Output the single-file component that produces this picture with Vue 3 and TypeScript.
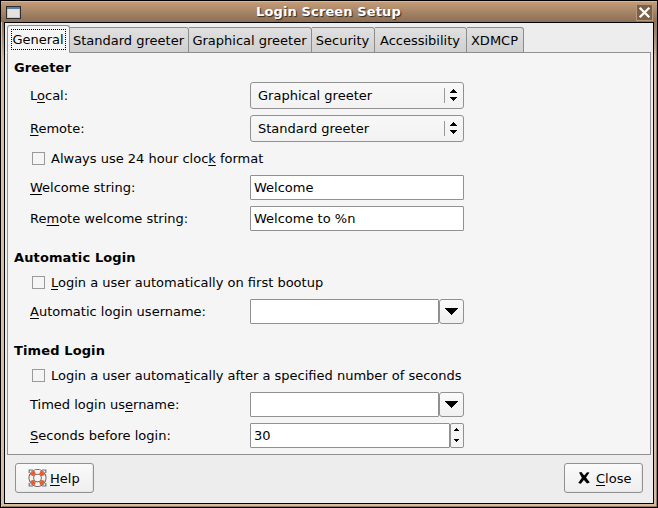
<script setup lang="ts">
import { ref } from 'vue'

interface Label { pre: string; key: string; post: string }

const tabs: { name: string; width: number }[] = [
  { name: 'General', width: 63 },
  { name: 'Standard greeter', width: 119 },
  { name: 'Graphical greeter', width: 123 },
  { name: 'Security', width: 63 },
  { name: 'Accessibility', width: 92 },
  { name: 'XDMCP', width: 57 },
]
const active = ref('General')

type Kind = 'select' | 'check' | 'text' | 'combo' | 'spin'
interface Field { kind: Kind; label: Label; value: string }

const l = (pre: string, key: string, post: string): Label => ({ pre, key, post })

const groups = ref<{ title: string; fields: Field[] }[]>([
  {
    title: 'Greeter',
    fields: [
      { kind: 'select', label: l('L', 'o', 'cal:'), value: 'Graphical greeter' },
      { kind: 'select', label: l('', 'R', 'emote:'), value: 'Standard greeter' },
      { kind: 'check', label: l('Always use 24 hour cloc', 'k', ' format'), value: '' },
      { kind: 'text', label: l('', 'W', 'elcome string:'), value: 'Welcome' },
      { kind: 'text', label: l('Re', 'm', 'ote welcome string:'), value: 'Welcome to %n' },
    ],
  },
  {
    title: 'Automatic Login',
    fields: [
      { kind: 'check', label: l('', 'L', 'ogin a user automatically on first bootup'), value: '' },
      { kind: 'combo', label: l('', 'A', 'utomatic login username:'), value: '' },
    ],
  },
  {
    title: 'Timed Login',
    fields: [
      { kind: 'check', label: l('Login a user automa', 't', 'ically after a specified number of seconds'), value: '' },
      { kind: 'combo', label: l('Timed login us', 'e', 'rname:'), value: '' },
      { kind: 'spin', label: l('', 'S', 'econds before login:'), value: '30' },
    ],
  },
])
</script>

<template>
  <div class="window">
    <header class="titlebar">
      <svg class="winicon" width="15" height="13" viewBox="0 0 15 13" shape-rendering="crispEdges">
        <rect width="15" height="13" fill="#2b2e30" />
        <rect x="1" y="1" width="13" height="2" fill="#5d7f9f" />
        <rect x="1" y="3" width="13" height="9" fill="#c9c8c5" />
        <rect x="2" y="3" width="11" height="8" fill="#e4e3e0" />
      </svg>
      <h1 class="title">Login Screen Setup</h1>
      <button class="winclose" aria-label="Close window">
        <svg width="15" height="15" viewBox="0 0 15 15">
          <path d="M2.7 2.7 12.3 12.3M12.3 2.7 2.7 12.3" stroke="#fff" stroke-width="2.3" />
        </svg>
      </button>
    </header>
    <main class="client">
      <nav class="tabs">
        <button
          v-for="t in tabs"
          :key="t.name"
          class="tab"
          :class="{ active: t.name === active }"
          :style="{ width: t.width + 'px' }"
          @click="active = t.name"
        ><span>{{ t.name }}</span></button>
      </nav>
      <div class="page">
        <section v-for="g in groups" :key="g.title" class="group">
          <h2>{{ g.title }}</h2>
          <label v-for="(f, i) in g.fields" :key="i" class="row" :class="f.kind">
            <span v-if="f.kind === 'check'" class="box"></span>
            <span class="label">{{ f.label.pre }}<u>{{ f.label.key }}</u>{{ f.label.post }}</span>
            <span v-if="f.kind === 'select'" class="dropdown">
              <span class="choice">{{ f.value }}</span>
              <svg width="7" height="12" viewBox="0 0 7 12" shape-rendering="crispEdges">
                <path d="M3 0h1v1h1v1h1v1h1v1H0V3h1V2h1V1h1zM0 8h7v1H6v1H5v1H4v1H3v-1H2v-1H1V9H0z" />
              </svg>
            </span>
            <input v-else-if="f.kind !== 'check'" v-model="f.value" class="entry" type="text" spellcheck="false" />
            <span v-if="f.kind === 'combo'" class="arrow">
              <svg width="13" height="7" viewBox="0 0 13 7" shape-rendering="crispEdges">
                <path d="M0 0h13v1h-1v1h-1v1h-1v1H9v1H8v1H7v1H6V6H5V5H4V4H3V3H2V2H1V1H0z" />
              </svg>
            </span>
            <span v-if="f.kind === 'spin'" class="spinner">
              <svg width="5" height="14" viewBox="0 0 5 14" shape-rendering="crispEdges">
                <path d="M2 0h1v1h1v1h1v1H0V2h1V1h1zM0 11h5v1H4v1H3v1H2v-1H1v-1H0z" />
              </svg>
            </span>
          </label>
        </section>
      </div>
      <footer class="actions">
        <button class="action help">
          <svg width="19" height="20" viewBox="0 0 19 20">
            <path d="M1.2 5V2H5M14 2h3.8V5M17.8 15v3H14M5 18H1.2v-3" fill="none" stroke="#6d7274" stroke-width="1.2" />
            <circle cx="9.5" cy="10" r="6.2" fill="none" stroke="#4a4a48" stroke-width="5.6" />
            <circle cx="9.5" cy="10" r="6.2" fill="none" stroke="#f4f2ee" stroke-width="4" />
            <path d="M9.5 10m5.73-2.37a6.2 6.2 0 0 0-3.36-3.36M7.13 4.27a6.2 6.2 0 0 0-3.36 3.36M3.77 12.37a6.2 6.2 0 0 0 3.36 3.36M11.87 15.73a6.2 6.2 0 0 0 3.36-3.36" fill="none" stroke="#ee5a2c" stroke-width="3.8" />
          </svg>
          <span><u>H</u>elp</span>
        </button>
        <button class="action close">
          <svg width="12" height="12" viewBox="0 0 12 12">
            <path d="M1 0.6 3.4 0 6.2 3.4 9 0.2 11.5 0.6 8 5.6 11.8 10.6 9 11.6 5.9 8 2.8 11.8 0.2 11 3.9 5.7z" />
          </svg>
          <span><u>C</u>lose</span>
        </button>
      </footer>
    </main>
  </div>
</template>

<style>
body {
  margin: 0;
  overflow: hidden;
}
</style>

<style scoped>
* {
  box-sizing: border-box;
}
.window {
  width: 658px;
  height: 508px;
  padding: 0 3px 3px;
  border: 1px solid #000;
  background: linear-gradient(#c49c78 0, #8c7056 21px, #d6bca2 60px, #d6bca2 100%);
  box-shadow: inset 1px 1px #e3c1a4, inset -1px -1px #94785e;
  font: 13px/17px 'DejaVu Sans', sans-serif;
  color: #000;
}
button,
input {
  font: inherit;
  color: inherit;
  margin: 0;
  padding: 0;
}
h1,
h2 {
  margin: 0;
  font: inherit;
  font-weight: bold;
  letter-spacing: 0.12px;
}
u {
  text-underline-offset: 2px;
  text-decoration-thickness: 1px;
  text-decoration-skip-ink: none;
}
.titlebar {
  display: flex;
  align-items: center;
  height: 21px;
  margin: 0 -3px;
  padding: 0 4px 0 5px;
  background: linear-gradient(#c39b77, #8a6e55);
  border-top: 1px solid #dfb793;
}
.winicon {
  flex: none;
  margin-top: 1px;
}
.title {
  flex: 1;
  text-align: center;
  color: #fff;
  text-shadow: 1px 1px 1px #33281c;
  margin-top: -1px;
}
.winclose {
  width: 17px;
  height: 17px;
  border: 1px solid #b9987a;
  background: #7a614a;
  display: grid;
  place-items: center;
}
.winclose svg {
  flex: none;
}
.client {
  height: 482px;
  border: 1px solid #000;
  background: #ededed;
  padding: 2px 2px 0;
}
.tabs {
  display: flex;
  align-items: flex-end;
  height: 28px;
  margin-bottom: -1px;
}
.tab {
  height: 26px;
  padding: 1px 1px 0 0;
  border: 1px solid #8c8c8c;
  border-left: 0;
  border-radius: 0 3px 0 0;
  background: linear-gradient(#e0e0e0, #d0d0d0);
  white-space: nowrap;
}
.tab.active {
  height: 28px;
  border-left: 1px solid #8c8c8c;
  border-bottom-color: #f5f5f5;
  border-radius: 3px 3px 0 0;
  background: #f5f5f5;
  padding: 1px 3px 0 3px;
}
.tab.active span {
  display: block;
  height: 21px;
  line-height: 19px;
  border: 1px dotted #000;
  text-indent: -1px;
}
.page {
  height: 403px;
  border: 1px solid #919191;
  background: #f5f5f5;
  padding: 6px;
}
.group + .group {
  margin-top: 18px;
}
.group {
  display: flex;
  flex-direction: column;
  gap: 6px;
}
.row {
  display: flex;
  align-items: center;
  height: 25px;
  padding-left: 16px;
}
.label {
  width: 220px;
  white-space: nowrap;
}
.check {
  height: 21px;
  padding-left: 18px;
  gap: 6px;
}
.select {
  height: 27px;
}
.box {
  width: 13px;
  height: 13px;
  border: 1px solid #9a9a9a;
}
.dropdown {
  display: flex;
  align-items: center;
  width: 214px;
  height: 27px;
  padding: 0 6px 0 7px;
  border: 1px solid #919191;
  border-radius: 3px;
  background: linear-gradient(#f8f8f8, #f2f2f2);
}
.choice {
  flex: 1;
}
.dropdown svg {
  box-sizing: content-box;
  padding: 1px 0 2px 5px;
  border-left: 1px solid #999;
}
.entry {
  width: 214px;
  height: 25px;
  padding: 0 3px;
  border: 1px solid #919191;
  border-radius: 1px;
  background: #fff;
  outline: none;
}
.combo .entry {
  width: 189px;
}
.arrow {
  display: grid;
  place-items: center;
  width: 25px;
  height: 25px;
  border: 1px solid #919191;
  border-radius: 3px;
  background: linear-gradient(#fafafa, #f0f0f0);
}
.spin .entry {
  width: 200px;
}
.spinner {
  display: grid;
  place-items: center;
  width: 14px;
  height: 25px;
  padding: 0 1px 1px 0;
  border: 1px solid #919191;
  border-radius: 2px;
}
.actions {
  display: flex;
  justify-content: space-between;
  padding: 8px 8px 0;
}
.action {
  display: flex;
  align-items: center;
  width: 79px;
  height: 30px;
  border: 1px solid #919191;
  border-radius: 3px;
  background: linear-gradient(#fafafa, #efefef);
  box-shadow: inset -1px -1px 1px #e6e6e6;
}
.help {
  gap: 3px;
  padding-left: 12px;
}
.help svg {
  margin-top: -1px;
}
.close {
  gap: 6px;
  padding-left: 13px;
}
</style>
